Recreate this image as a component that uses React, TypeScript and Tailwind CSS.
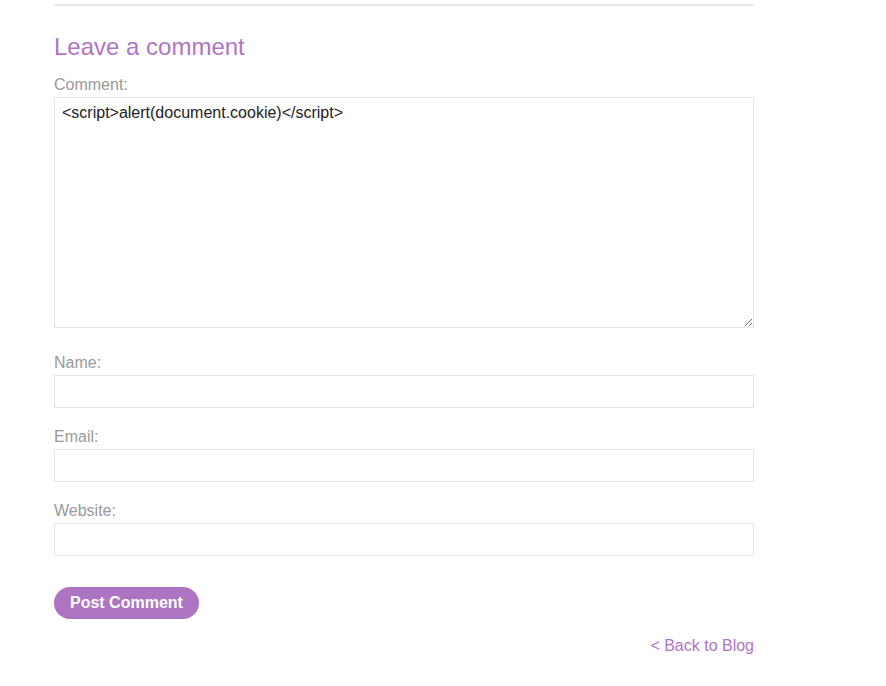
import React from 'react'

const fields = ['Name', 'Email', 'Website']

const App = () => {
  return (
    <div className="min-h-screen bg-white font-['Liberation_Sans',Arial,sans-serif]">
      <div className="w-[700px] ml-[54px]">
        <div className="h-[2px] mt-[4px] bg-[#e6e6e6]" />

        <h2 className="mt-[27px] text-[24px] leading-[28px] text-[#b074c4] font-normal">
          Leave a comment
        </h2>

        <form className="flex flex-col" onSubmit={e => e.preventDefault()}>
          <label className="mt-[15px] text-[16px] leading-[18px] text-[#999999]">Comment:</label>
          <textarea
            className="mt-[3px] h-[231px] w-full border border-[#e6e6e6] px-[7px] py-[6px] text-[16px] leading-[18px] text-[#222] resize-y outline-none font-['Liberation_Sans',Arial,sans-serif]"
            defaultValue="<script>alert(document.cookie)</script>"
          />

          {
            fields.map((f, idx) => (
              <div key={f} className={idx === 0 ? 'mt-[25px]' : 'mt-[19px]'}>
                <label className="block pt-[1px] text-[16px] leading-[18px] text-[#999999]">{f}:</label>
                <input
                  type="text"
                  className="block mt-[3px] h-[33px] w-full border border-[#e6e6e6] px-[7px] text-[16px] outline-none"
                />
              </div>
            ))
          }

          <div className="mt-[31px]">
            <button
              type="submit"
              className="h-[32px] px-[16px] rounded-full bg-[#ae74c4] text-white font-bold text-[16px] leading-[18px]"
            >
              Post Comment
            </button>
          </div>
        </form>

        <div className="mt-[18px] flex justify-end">
          <a href="#" className="text-[16px] leading-[18px] text-[#b074c4]">&lt; Back to Blog</a>
        </div>
      </div>
    </div>
  )
}

export default App
